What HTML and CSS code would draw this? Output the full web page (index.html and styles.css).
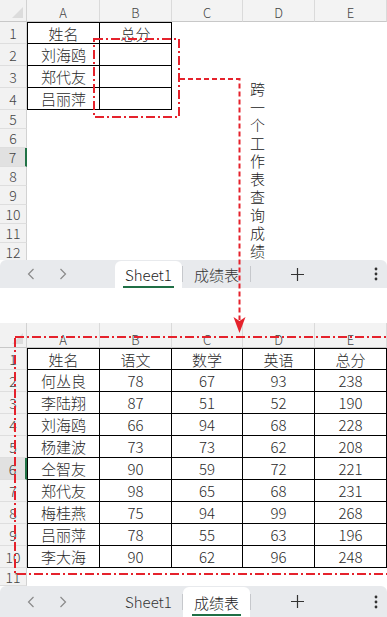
FILE: index.html
```html
<!DOCTYPE html>
<html>
<head>
  <meta charset="utf-8">
  <title>跨工作表查询成绩</title>
  <link rel="stylesheet" href="styles.css">
</head>
<body>
  <div class="page">

    <!-- 上方：Sheet1 -->
    <div class="sheet sheet-top">
      <div class="grid">
        <div class="row hd">
          <div class="rh corner"><span class="tri"></span></div>
          <div class="ch ca">A</div><div class="ch cb">B</div><div class="ch cc">C</div><div class="ch cd">D</div><div class="ch ce">E</div>
        </div>
        <div class="row r22"><div class="rh">1</div><div class="c ca b l t">姓名</div><div class="c cb b t">总分</div></div>
        <div class="row r22"><div class="rh">2</div><div class="c ca b l">刘海鸥</div><div class="c cb b"></div></div>
        <div class="row r22"><div class="rh">3</div><div class="c ca b l">郑代友</div><div class="c cb b"></div></div>
        <div class="row r22"><div class="rh">4</div><div class="c ca b l">吕丽萍</div><div class="c cb b"></div></div>
        <div class="row r19"><div class="rh">5</div></div>
        <div class="row r19"><div class="rh">6</div></div>
        <div class="row r19"><div class="rh sel">7</div></div>
        <div class="row r19"><div class="rh">8</div></div>
        <div class="row r19"><div class="rh">9</div></div>
        <div class="row r19"><div class="rh">10</div></div>
        <div class="row r19"><div class="rh">11</div></div>
        <div class="row r19"><div class="rh">12</div></div>
      </div>
      <div class="tabs">
        <div class="nav">
          <svg width="8" height="12" viewBox="0 0 8 12"><polyline points="6.5,1 1.5,6 6.5,11" fill="none" stroke="#8a8a8a" stroke-width="1.2"/></svg>
          <svg width="8" height="12" viewBox="0 0 8 12"><polyline points="1.5,1 6.5,6 1.5,11" fill="none" stroke="#8a8a8a" stroke-width="1.2"/></svg>
        </div>
        <div class="tab active"><span>Sheet1</span></div>
        <div class="sep"></div>
        <div class="tab"><span>成绩表</span></div>
        <div class="sep"></div>
        <div class="add"><svg width="13" height="13" viewBox="0 0 13 13"><path d="M6.5 0V13M0 6.5H13" stroke="#333" stroke-width="1.2"/></svg></div>
        <div class="more"><svg width="4" height="14" viewBox="0 0 4 14"><circle cx="2" cy="2" r="1.4" fill="#333"/><circle cx="2" cy="7" r="1.4" fill="#333"/><circle cx="2" cy="12" r="1.4" fill="#333"/></svg></div>
      </div>
    </div>

    <div class="gap"></div>

    <!-- 下方：成绩表 -->
    <div class="sheet sheet-bottom">
      <div class="grid">
        <div class="row hd hd-low">
          <div class="rh corner"><span class="tri"></span></div>
          <div class="ch ca">A</div><div class="ch cb">B</div><div class="ch cc">C</div><div class="ch cd">D</div><div class="ch ce">E</div>
        </div>
        <div class="row r22"><div class="rh">1</div><div class="c ca b l t">姓名</div><div class="c cb b t">语文</div><div class="c cc b t">数学</div><div class="c cd b t">英语</div><div class="c ce b t">总分</div></div>
        <div class="row r22"><div class="rh">2</div><div class="c ca b l">何丛良</div><div class="c cb b">78</div><div class="c cc b">67</div><div class="c cd b">93</div><div class="c ce b">238</div></div>
        <div class="row r22"><div class="rh">3</div><div class="c ca b l">李陆翔</div><div class="c cb b">87</div><div class="c cc b">51</div><div class="c cd b">52</div><div class="c ce b">190</div></div>
        <div class="row r22"><div class="rh">4</div><div class="c ca b l">刘海鸥</div><div class="c cb b">66</div><div class="c cc b">94</div><div class="c cd b">68</div><div class="c ce b">228</div></div>
        <div class="row r22"><div class="rh">5</div><div class="c ca b l">杨建波</div><div class="c cb b">73</div><div class="c cc b">73</div><div class="c cd b">62</div><div class="c ce b">208</div></div>
        <div class="row r22"><div class="rh sel">6</div><div class="c ca b l">仝智友</div><div class="c cb b">90</div><div class="c cc b">59</div><div class="c cd b">72</div><div class="c ce b">221</div></div>
        <div class="row r22"><div class="rh">7</div><div class="c ca b l">郑代友</div><div class="c cb b">98</div><div class="c cc b">65</div><div class="c cd b">68</div><div class="c ce b">231</div></div>
        <div class="row r22"><div class="rh">8</div><div class="c ca b l">梅桂燕</div><div class="c cb b">75</div><div class="c cc b">94</div><div class="c cd b">99</div><div class="c ce b">268</div></div>
        <div class="row r22"><div class="rh">9</div><div class="c ca b l">吕丽萍</div><div class="c cb b">78</div><div class="c cc b">55</div><div class="c cd b">63</div><div class="c ce b">196</div></div>
        <div class="row r22"><div class="rh">10</div><div class="c ca b l">李大海</div><div class="c cb b">90</div><div class="c cc b">62</div><div class="c cd b">96</div><div class="c ce b">248</div></div>
        <div class="row r18"><div class="rh">11</div></div>
      </div>
      <div class="tabs tabs-low">
        <div class="nav">
          <svg width="8" height="12" viewBox="0 0 8 12"><polyline points="6.5,1 1.5,6 6.5,11" fill="none" stroke="#8a8a8a" stroke-width="1.2"/></svg>
          <svg width="8" height="12" viewBox="0 0 8 12"><polyline points="1.5,1 6.5,6 1.5,11" fill="none" stroke="#8a8a8a" stroke-width="1.2"/></svg>
        </div>
        <div class="tab"><span>Sheet1</span></div>
        <div class="sep"></div>
        <div class="tab active"><span>成绩表</span></div>
        <div class="sep"></div>
        <div class="add"><svg width="13" height="13" viewBox="0 0 13 13"><path d="M6.5 0V13M0 6.5H13" stroke="#333" stroke-width="1.2"/></svg></div>
        <div class="more"><svg width="4" height="14" viewBox="0 0 4 14"><circle cx="2" cy="2" r="1.4" fill="#333"/><circle cx="2" cy="7" r="1.4" fill="#333"/><circle cx="2" cy="12" r="1.4" fill="#333"/></svg></div>
      </div>
    </div>

    <!-- 标注 -->
    <div class="note">跨一个工作表查询成绩</div>
    <svg class="marks" width="387" height="617" viewBox="0 0 387 617">
      <rect x="94" y="39" width="85" height="78" fill="none" stroke="#e5222c" stroke-width="2" stroke-dasharray="9 3 2 3"/>
      <path d="M180 79H239.5V320" fill="none" stroke="#e5222c" stroke-width="2" stroke-dasharray="5 3"/>
      <path d="M233.5 317L239.5 321L245.5 317L239.5 333Z" fill="#e5222c"/>
      <rect x="15" y="337" width="380" height="237" fill="none" stroke="#e5222c" stroke-width="2" stroke-dasharray="9 3 2 3"/>
    </svg>
  </div>
</body>
</html>
```

FILE: styles.css
```css
body {
  margin: 0;
  background: #fff;
  font-family: "Noto Sans CJK SC", "Liberation Sans", sans-serif;
  font-weight: 300;
  color: #222;
}

.page {
  position: relative;
  width: 387px;
  height: 617px;
  overflow: hidden;
}

.sheet-top .grid {
  height: 260px;
  overflow: hidden;
}

.sheet-bottom .grid {
  height: 263px;
  overflow: hidden;
}

.gap {
  height: 35px;
}

.row {
  display: flex;
}

.r22 { height: 22px; }
.r19 { height: 19px; }
.r18 { height: 18px; }

/* 行号 */
.rh {
  width: 27px;
  flex: none;
  box-sizing: border-box;
  background: #f2f2f2;
  border-right: 1px solid #d2d2d2;
  border-bottom: 1px solid #dedede;
  color: #444;
  font-size: 14px;
  display: flex;
  align-items: center;
  justify-content: center;
}

.rh.sel {
  background: #e1e1e1;
  border-right: 2px solid #217346;
}

/* 列标 */
.hd {
  height: 22px;
  background: #f3f3f3;
}

.hd .rh {
  border-bottom: 1px solid #c8c8c8;
}

.corner {
  position: relative;
}

.tri {
  position: absolute;
  right: 3px;
  bottom: 3px;
  width: 0;
  height: 0;
  border-left: 11px solid transparent;
  border-bottom: 11px solid #dcdcdc;
}

.ch {
  box-sizing: border-box;
  border-right: 1px solid #dadada;
  border-bottom: 1px solid #c8c8c8;
  color: #444;
  font-size: 13px;
  text-align: center;
  padding-top: 5px;
  line-height: 16px;
}

.hd-low {
  height: 25px;
}

.hd-low .ch {
  padding-top: 9px;
}

.ca { width: 73px; }
.cb { width: 72px; }
.cc { width: 71px; }
.cd { width: 72px; }
.ce { width: 72px; }

.c {
  flex: none;
  box-sizing: border-box;
  font-size: 15px;
  color: #2a2a2a;
  display: flex;
  align-items: center;
  justify-content: center;
}

.b {
  border-right: 1px solid #000;
  border-bottom: 1px solid #000;
}

.b.l { border-left: 1px solid #000; }
.b.t { border-top: 1px solid #000; }

/* 工作表标签 */
.tabs {
  height: 28px;
  background: #e8eaed;
  display: flex;
  align-items: stretch;
  font-size: 15px;
  border-radius: 6px 6px 0 0;
}

.tabs-low {
  height: 31px;
}

.nav {
  width: 115px;
  display: flex;
  align-items: center;
  gap: 24px;
  padding-left: 27px;
  box-sizing: border-box;
}

.tab {
  width: 67px;
  display: flex;
  align-items: center;
  justify-content: center;
  color: #333;
  position: relative;
}

.tab.active {
  background: #fff;
  border-radius: 6px 6px 0 0;
  margin-top: 1px;
  color: #222;
}

.tab.active span {
  border-bottom: 2px solid #1f6f45;
  padding: 0 2px;
  line-height: 22px;
  margin-top: 3px;
}

.sep {
  width: 1px;
  height: 16px;
  background: #c6c8cc;
  align-self: center;
}

.add {
  width: 92px;
  display: flex;
  align-items: center;
  justify-content: center;
}

.more {
  flex: 1;
  display: flex;
  align-items: center;
  justify-content: flex-end;
  padding-right: 9px;
}

/* 标注 */
.note {
  position: absolute;
  left: 250px;
  top: 82px;
  writing-mode: vertical-rl;
  font-size: 15px;
  line-height: 15px;
  letter-spacing: 3px;
  color: #222;
}

.marks {
  position: absolute;
  left: 0;
  top: 0;
  pointer-events: none;
}
```
